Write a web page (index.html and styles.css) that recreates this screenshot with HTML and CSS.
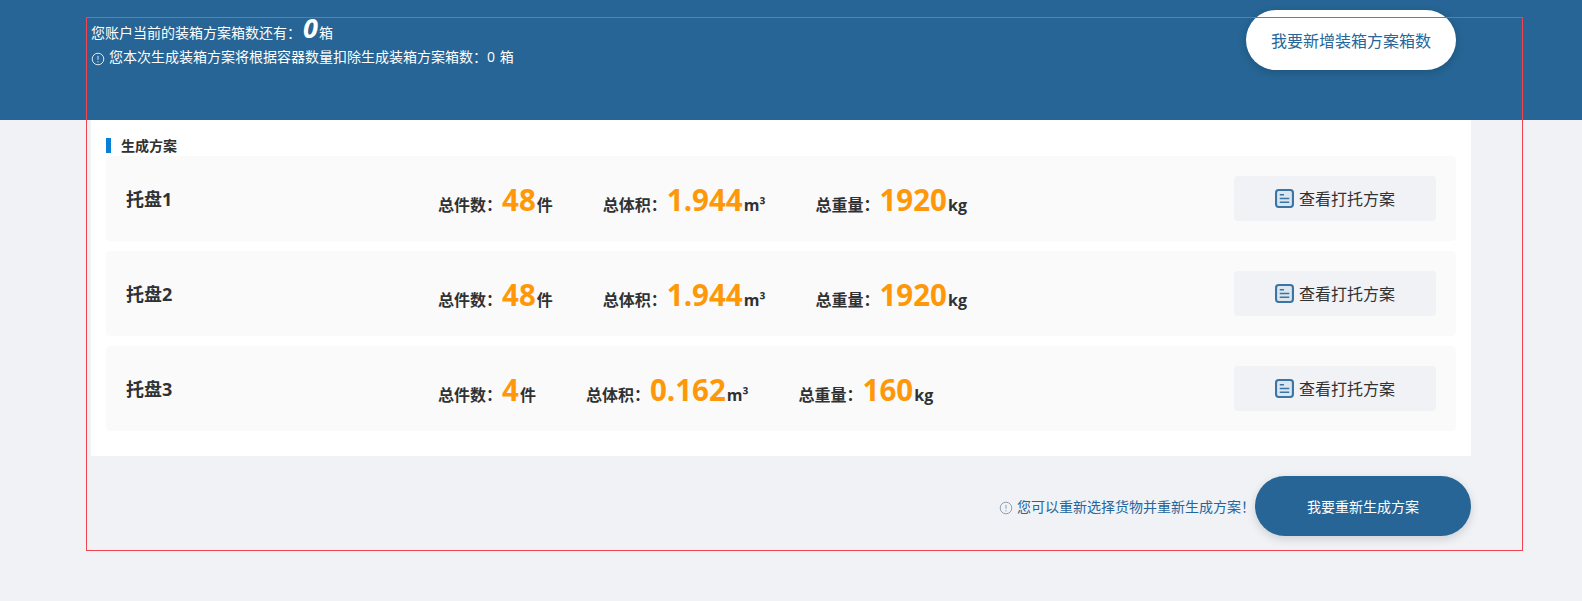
FILE: index.html
```html
<!DOCTYPE html>
<html lang="zh">
<head>
<meta charset="utf-8">
<title>生成方案</title>
<link rel="stylesheet" href="styles.css">
</head>
<body>
<div class="outline"></div>
<header class="top">
  <div class="top-info">
    <div class="quota">您账户当前的装箱方案箱数还有：<em class="quota-num">0</em>箱</div>
    <div class="deduct">
      <svg class="tip" viewBox="0 0 14 14"><circle cx="7" cy="7" r="5.8" fill="none" stroke="currentColor"/><path d="M7 3.8v4M7 9.2v1.2" stroke="currentColor" fill="none"/></svg>
      <span class="deduct-text">您本次生成装箱方案将根据容器数量扣除生成装箱方案箱数：0 箱</span>
    </div>
  </div>
  <button class="add-btn">我要新增装箱方案箱数</button>
</header>
<main class="panel">
  <h2 class="title">生成方案</h2>
  <div class="rows">
    <section class="row">
      <div class="name">托盘1</div>
      <div class="stats">
        <div class="stat"><span class="k">总件数：</span><b class="v">48</b><span class="u">件</span></div>
        <div class="stat"><span class="k">总体积：</span><b class="v">1.944</b><span class="u">m³</span></div>
        <div class="stat"><span class="k">总重量：</span><b class="v">1920</b><span class="u">kg</span></div>
      </div>
      <button class="view"><svg class="doc" viewBox="0 0 18 18"><rect x="1" y="1" width="16" height="16" rx="2.5" fill="#dbe6ef" stroke="#3a75a5" stroke-width="2"/><path d="M4.5 5.5h4M4.5 9h9M4.5 12.5h9" stroke="#3a75a5" stroke-width="1.5" fill="none"/></svg>查看打托方案</button>
    </section>
    <section class="row">
      <div class="name">托盘2</div>
      <div class="stats">
        <div class="stat"><span class="k">总件数：</span><b class="v">48</b><span class="u">件</span></div>
        <div class="stat"><span class="k">总体积：</span><b class="v">1.944</b><span class="u">m³</span></div>
        <div class="stat"><span class="k">总重量：</span><b class="v">1920</b><span class="u">kg</span></div>
      </div>
      <button class="view"><svg class="doc" viewBox="0 0 18 18"><rect x="1" y="1" width="16" height="16" rx="2.5" fill="#dbe6ef" stroke="#3a75a5" stroke-width="2"/><path d="M4.5 5.5h4M4.5 9h9M4.5 12.5h9" stroke="#3a75a5" stroke-width="1.5" fill="none"/></svg>查看打托方案</button>
    </section>
    <section class="row">
      <div class="name">托盘3</div>
      <div class="stats">
        <div class="stat"><span class="k">总件数：</span><b class="v">4</b><span class="u">件</span></div>
        <div class="stat"><span class="k">总体积：</span><b class="v">0.162</b><span class="u">m³</span></div>
        <div class="stat"><span class="k">总重量：</span><b class="v">160</b><span class="u">kg</span></div>
      </div>
      <button class="view"><svg class="doc" viewBox="0 0 18 18"><rect x="1" y="1" width="16" height="16" rx="2.5" fill="#dbe6ef" stroke="#3a75a5" stroke-width="2"/><path d="M4.5 5.5h4M4.5 9h9M4.5 12.5h9" stroke="#3a75a5" stroke-width="1.5" fill="none"/></svg>查看打托方案</button>
    </section>
  </div>
</main>
<footer class="foot">
  <svg class="tip tip-muted" viewBox="0 0 14 14"><circle cx="7" cy="7" r="5.8" fill="none" stroke="currentColor"/><path d="M7 3.8v4M7 9.2v1.2" stroke="currentColor" fill="none"/></svg>
  <span class="foot-note">您可以重新选择货物并重新生成方案！</span>
  <button class="regen">我要重新生成方案</button>
</footer>
</body>
</html>
```
FILE: styles.css
```css
* { box-sizing: border-box; }
html, body { margin: 0; padding: 0; }
body {
  position: relative;
  height: 601px;
  overflow: hidden;
  background: #f0f2f6;
  font-family: "Open Sans", "Noto Sans CJK SC", sans-serif;
  color: #303133;
}
button { font-family: inherit; border: 0; cursor: pointer; }
.outline {
  position: absolute;
  left: 86px;
  top: 17px;
  width: 1437px;
  height: 534px;
  border: 1px solid #f0444f;
  pointer-events: none;
  z-index: 5;
}
.top {
  height: 120px;
  background: #266595;
  padding: 10px 126px 0 91px;
  display: flex;
  justify-content: space-between;
  align-items: flex-start;
  color: #fff;
}
.top-info { padding-top: 6px; }
.quota {
  font-size: 14px;
  line-height: 34px;
  height: 34px;
  display: flex;
  align-items: baseline;
}
.quota-num {
  font-size: 27px;
  font-weight: 700;
  font-style: italic;
  margin: 0 1px 0 2px;
  line-height: 24px;
}
.deduct {
  display: flex;
  align-items: center;
  font-size: 14px;
  line-height: 20px;
  margin-top: -3px;
}
.deduct-text { padding-bottom: 4px; word-spacing: 1px; }
.tip { width: 14px; height: 14px; flex: none; margin-right: 4px; color: #dde6ee; }
.tip-muted { color: #8fa3b5; margin-top: 4px; }
.add-btn {
  width: 210px;
  height: 60px;
  border-radius: 30px;
  background: #fff;
  color: #26669a;
  font-size: 16px;
  box-shadow: 0 2px 8px rgba(0, 0, 0, .18);
}
.panel {
  width: 1380px;
  height: 336px;
  margin-left: 91px;
  background: #fff;
  padding: 15px 15px 0;
}
.title {
  margin: 0;
  height: 21px;
  padding-left: 15px;
  font-size: 14px;
  line-height: 21px;
  font-weight: 700;
  position: relative;
}
.title::before {
  content: "";
  position: absolute;
  left: 0;
  top: 3px;
  width: 5px;
  height: 15px;
  background: #0a7fd6;
}
.rows { display: flex; flex-direction: column; gap: 10px; }
.row {
  height: 85px;
  background: #fafafa;
  border-radius: 4px;
  padding: 0 20px;
  display: flex;
  align-items: center;
}
.name {
  width: 312px;
  flex: none;
  font-size: 18px;
  font-weight: 700;
  padding-bottom: 1px;
}
.stats { flex: 1; display: flex; align-items: baseline; gap: 50px; padding-top: 3px; }
.stat { display: flex; align-items: baseline; font-size: 16px; font-weight: 700; }
.v { font-size: 29.5px; font-weight: 700; color: #ff9808; line-height: 40px; }
.u { margin-left: 1px; }
.view {
  width: 202px;
  height: 45px;
  background: #f0f2f6;
  border-radius: 4px;
  font-size: 16px;
  color: #303133;
  display: flex;
  align-items: center;
  justify-content: center;
  margin-bottom: 1px;
}
.doc { width: 19px; height: 19px; margin-right: 5px; }
.foot {
  width: 1471px;
  padding-top: 20px;
  display: flex;
  align-items: center;
  justify-content: flex-end;
}
.foot-note { font-size: 14px; color: #26669a; }
.regen {
  width: 216px;
  height: 60px;
  border-radius: 30px;
  background: #266595;
  color: #fff;
  font-size: 14px;
  box-shadow: 0 3px 10px rgba(0, 0, 0, .15);
}
```
